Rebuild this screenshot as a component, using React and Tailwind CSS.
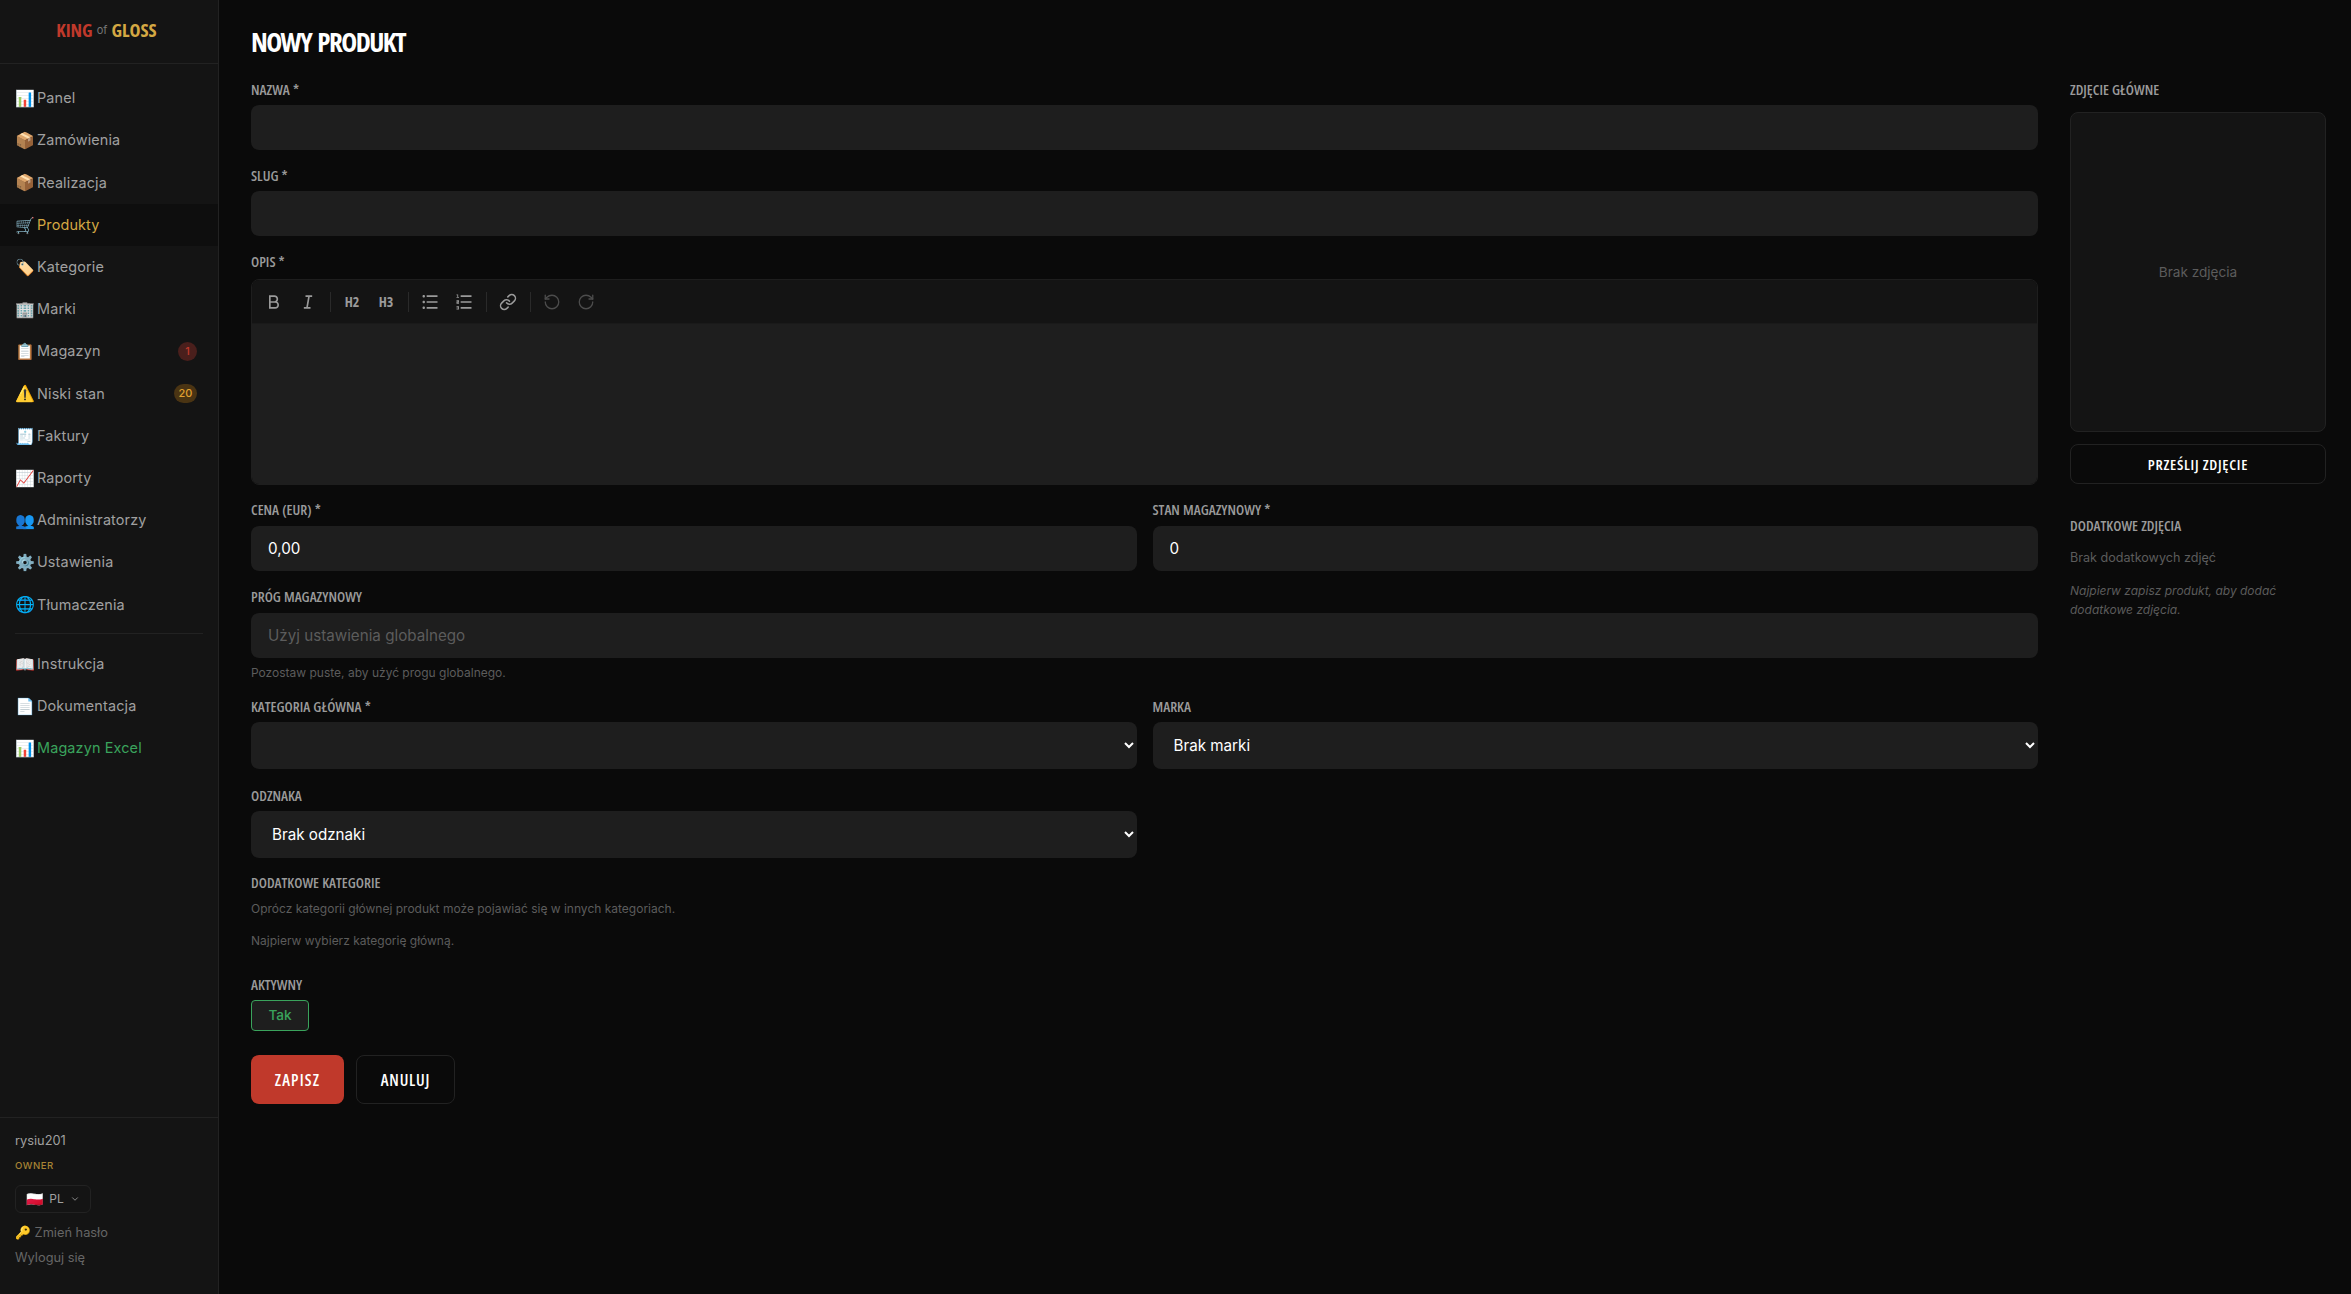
import { ChevronDown, Link, RotateCcw, RotateCw } from "lucide-react";
import { RiBold, RiItalic, RiListOrdered, RiListUnordered } from "react-icons/ri";

const NAV = [
  { icon: "📊", label: "Panel" },
  { icon: "📦", label: "Zamówienia" },
  { icon: "📦", label: "Realizacja" },
  { icon: "🛒", label: "Produkty", active: true },
  { icon: "🏷️", label: "Kategorie" },
  { icon: "🏢", label: "Marki" },
  { icon: "📋", label: "Magazyn", badge: "1", badgeClass: "bg-[#4a1f1c] text-[#c0392b] w-[19px]" },
  { icon: "⚠️", label: "Niski stan", badge: "20", badgeClass: "bg-[#4a3413] text-[#e0a030] w-[23px]" },
  { icon: "🧾", label: "Faktury" },
  { icon: "📈", label: "Raporty" },
  { icon: "👥", label: "Administratorzy" },
  { icon: "⚙️", label: "Ustawienia" },
  { icon: "🌐", label: "Tłumaczenia" },
];

const NAV_BOTTOM = [
  { icon: "📖", label: "Instrukcja" },
  { icon: "📄", label: "Dokumentacja" },
  { icon: "📊", label: "Magazyn Excel", green: true },
];

function NavItem({ item }) {
  return (
    <div className={`flex h-[42.2px] items-center gap-[4px] pl-[15px] pr-[21px] text-[14.4px] tracking-[0.15px] ${item.active ? "bg-[#0e0e0e] text-[#d4a843]" : item.green ? "text-[#3aa35c]" : "text-[#a0a0a0]"}`}>
      <span className="w-[18px] text-center text-[16px] leading-none">{item.icon}</span>
      <span className="flex-1">{item.label}</span>
      {item.badge && (
        <span className={`flex h-[19px] items-center justify-center rounded-full text-[11px] font-medium ${item.badgeClass}`}>{item.badge}</span>
      )}
    </div>
  );
}

function Label({ children, className = "" }) {
  return <label className={`block font-['Open_Sans',sans-serif] [font-stretch:75%] text-[14.4px] leading-[17px] font-semibold [word-spacing:0.5px] text-[#9a9a9a] ${className}`}>{children}</label>;
}

function Input(props) {
  return <input className="block h-[45px] w-full rounded-[8px] bg-[#1e1e1e] px-[17px] text-[15.2px] text-white outline-none placeholder:text-[#5c5c5c]" {...props} />;
}

function Select({ children }) {
  return <select className="block h-[47px] w-full rounded-[8px] bg-[#1e1e1e] pl-[17px] pr-0 text-[15.2px] text-white outline-none">{children}</select>;
}

function ToolBtn({ children, muted }) {
  return <span className={`flex h-[30px] w-[30px] items-center justify-center ${muted ? "text-[#4c4c4c]" : "text-[#9a9a9a]"}`}>{children}</span>;
}

function Sep() {
  return <span className="mx-[2.5px] h-[20px] w-px bg-[#2a2a2a]" />;
}

function Toolbar() {
  return (
    <div className="flex h-[44px] items-center gap-[4px] border-b border-[#1a1a1a] bg-[#141414] px-[7px]">
      <ToolBtn><RiBold size={20} /></ToolBtn>
      <ToolBtn><RiItalic size={20} /></ToolBtn>
      <Sep />
      <ToolBtn><span className="font-['Open_Sans',sans-serif] [font-stretch:75%] text-[14px] font-bold">H2</span></ToolBtn>
      <ToolBtn><span className="font-['Open_Sans',sans-serif] [font-stretch:75%] text-[14px] font-bold">H3</span></ToolBtn>
      <Sep />
      <ToolBtn><RiListUnordered size={20} /></ToolBtn>
      <ToolBtn><RiListOrdered size={20} /></ToolBtn>
      <Sep />
      <ToolBtn><Link size={18} strokeWidth={2} /></ToolBtn>
      <Sep />
      <ToolBtn muted><RotateCcw size={18} strokeWidth={1.75} /></ToolBtn>
      <ToolBtn muted><RotateCw size={18} strokeWidth={1.75} /></ToolBtn>
    </div>
  );
}

function Sidebar() {
  return (
    <aside className="flex min-h-[1294px] w-[219px] shrink-0 flex-col border-r border-[#222222] bg-[#141414]">
      <div className="flex h-[64px] items-center justify-center border-b border-[#222222] pr-[5px] pb-[3px] font-['Open_Sans',sans-serif] [font-stretch:75%] text-[18.5px] font-bold">
        <span className="text-[#c0392b]">KING</span>
        <span className="mx-[4px] font-['Inter',sans-serif] text-[11px] font-normal text-[#777777]">of</span>
        <span className="text-[#d4a843]">GLOSS</span>
      </div>
      <nav className="pt-[13px]">
        {NAV.map((item) => <NavItem key={item.label} item={item} />)}
        <div className="mx-[15px] my-[8px] h-px bg-[#222222]" />
        {NAV_BOTTOM.map((item) => <NavItem key={item.label} item={item} />)}
      </nav>
      <div className="mt-auto border-t border-[#222222] px-[15px] pt-[13px] pb-[26px]">
        <div className="text-[12.8px] leading-[20px] text-[#a0a0a0]">rysiu201</div>
        <div className="mt-[8px] text-[9.6px] leading-[14px] font-medium tracking-[0.5px] text-[#a88434]">OWNER</div>
        <div className="mt-[12px] flex h-[28px] w-[76px] items-center justify-center gap-[6px] rounded-[6px] border border-[#222222] text-[12px] text-[#a0a0a0]">
          <span className="text-[14px] leading-none">🇵🇱</span>
          <span>PL</span>
          <ChevronDown size={10} />
        </div>
        <div className="mt-[10px] text-[12.8px] leading-[20px] text-[#666666]">🔑 Zmień hasło</div>
        <div className="mt-[5px] text-[12.8px] leading-[20px] text-[#666666]">Wyloguj się</div>
      </div>
    </aside>
  );
}

function Gallery() {
  return (
    <div className="w-[256px] shrink-0">
      <Label>ZDJĘCIE GŁÓWNE</Label>
      <div className="mt-[14px] flex h-[320px] items-center justify-center rounded-[8px] border border-[#222222] bg-[#141414] text-[13.6px] text-[#5c5c5c]">Brak zdjęcia</div>
      <button className="mt-[12px] h-[40px] w-full rounded-[8px] border border-[#222222] font-['Open_Sans',sans-serif] [font-stretch:75%] text-[15px] font-semibold tracking-[0.7px] text-white">PRZEŚLIJ ZDJĘCIE</button>
      <Label className="mt-[33px]">DODATKOWE ZDJĘCIA</Label>
      <p className="mt-[14px] text-[12.6px] leading-[20px] text-[#5c5c5c]">Brak dodatkowych zdjęć</p>
      <p className="mt-[13px] text-[12px] leading-[19px] text-[#5c5c5c] italic">Najpierw zapisz produkt, aby dodać dodatkowe zdjęcia.</p>
    </div>
  );
}

export default function App() {
  return (
    <div className="flex min-h-[1294px] bg-[#0a0a0a] font-['Inter',sans-serif]">
      <Sidebar />
      <main className="flex-1 pt-[24px] pr-[25px] pl-[32px]">
        <h1 className="font-['Open_Sans',sans-serif] [font-stretch:75%] text-[27px] leading-[36px] font-bold tracking-[-1.6px] [word-spacing:3px] text-white">NOWY PRODUKT</h1>
        <div className="mt-[21px] flex gap-[32px]">
          <div className="min-w-0 flex-1">
            <Label>NAZWA *</Label>
            <div className="mt-[7px]"><Input /></div>
            <Label className="mt-[17px]">SLUG *</Label>
            <div className="mt-[7px]"><Input /></div>
            <Label className="mt-[17px]">OPIS *</Label>
            <div className="mt-[9px] overflow-hidden rounded-[8px] border border-[#1e1e1e]">
              <Toolbar />
              <div className="h-[160px] bg-[#1e1e1e]" />
            </div>
            <div className="mt-[16px] grid grid-cols-2 gap-[16px]">
              <div>
                <Label>CENA (EUR) *</Label>
                <div className="mt-[8px]"><Input defaultValue="0,00" /></div>
              </div>
              <div>
                <Label>STAN MAGAZYNOWY *</Label>
                <div className="mt-[8px]"><Input defaultValue="0" /></div>
              </div>
            </div>
            <Label className="mt-[17px]">PRÓG MAGAZYNOWY</Label>
            <div className="mt-[8px]"><Input placeholder="Użyj ustawienia globalnego" /></div>
            <p className="mt-[7px] text-[12px] leading-[16px] text-[#5c5c5c]">Pozostaw puste, aby użyć progu globalnego.</p>
            <div className="mt-[17px] grid grid-cols-2 gap-[16px]">
              <div>
                <Label>KATEGORIA GŁÓWNA *</Label>
                <div className="mt-[7px]"><Select><option></option></Select></div>
              </div>
              <div>
                <Label>MARKA</Label>
                <div className="mt-[7px]"><Select><option>Brak marki</option></Select></div>
              </div>
            </div>
            <div className="mt-[18px] grid grid-cols-2 gap-[16px]">
              <div>
                <Label>ODZNAKA</Label>
                <div className="mt-[7px]"><Select><option>Brak odznaki</option></Select></div>
              </div>
            </div>
            <Label className="mt-[16px]">DODATKOWE KATEGORIE</Label>
            <p className="mt-[10px] text-[12px] leading-[16px] text-[#5c5c5c]">Oprócz kategorii głównej produkt może pojawiać się w innych kategoriach.</p>
            <p className="mt-[16px] text-[12px] leading-[16px] text-[#5c5c5c]">Najpierw wybierz kategorię główną.</p>
            <Label className="mt-[27px]">AKTYWNY</Label>
            <button className="mt-[7px] block h-[31px] w-[58px] rounded-[4px] border border-[#3aa35c] bg-[#1e1e1e] text-[13.6px] font-medium text-[#3aa35c]">Tak</button>
            <div className="mt-[24px] flex gap-[12px]">
              <button className="h-[49px] w-[93px] rounded-[8px] bg-[#c0392b] font-['Open_Sans',sans-serif] [font-stretch:75%] text-[16px] font-semibold tracking-[1.2px] text-white">ZAPISZ</button>
              <button className="h-[49px] w-[99px] rounded-[8px] border border-[#222222] font-['Open_Sans',sans-serif] [font-stretch:75%] text-[16px] font-semibold tracking-[0.8px] text-white">ANULUJ</button>
            </div>
          </div>
          <Gallery />
        </div>
      </main>
    </div>
  );
}
